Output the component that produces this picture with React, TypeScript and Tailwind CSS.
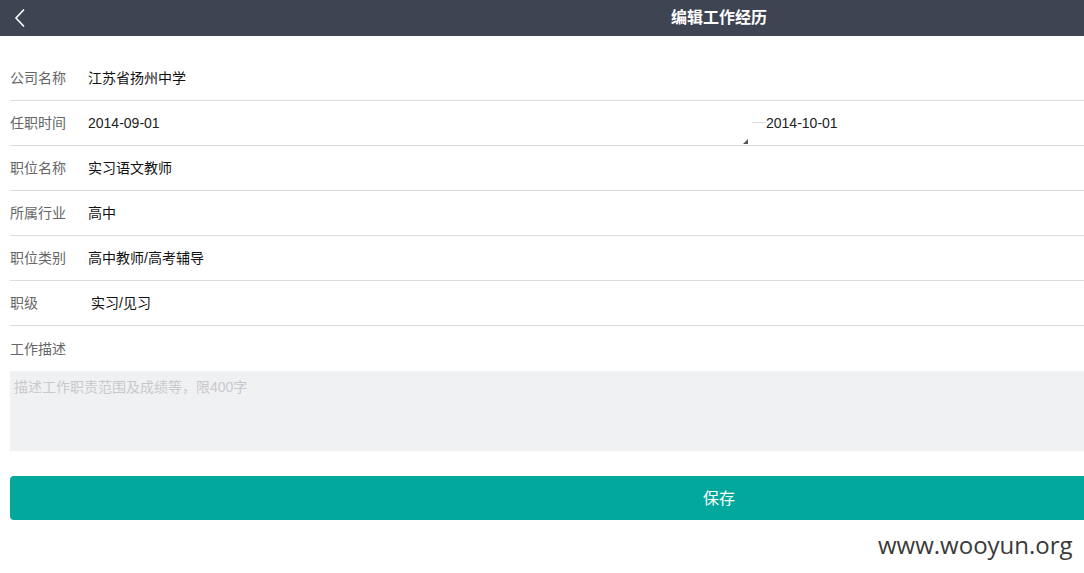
import React from 'react'

const rows = [
  { label: '公司名称', value: '江苏省扬州中学' },
  { label: '任职时间', value: '2014-09-01', end: '2014-10-01' },
  { label: '职位名称', value: '实习语文教师' },
  { label: '所属行业', value: '高中' },
  { label: '职位类别', value: '高中教师/高考辅导' },
  { label: '职级', value: '实习/见习', indent: true },
]

const font = { fontFamily: '"Liberation Sans", "Noto Sans CJK SC", sans-serif' }

export default function App() {
  return (
    <div className="w-full h-[573px] overflow-hidden bg-white relative" style={font}>
      <div className="w-[1438px]">
        <header className="h-9 bg-[#3f4452] flex items-center relative">
          <button className="w-10 h-9 flex items-center pl-[13px]">
            <svg width="14" height="20" viewBox="0 0 14 20" fill="none">
              <path d="M11 1.5 L3 10 L11 18.5" stroke="#fff" strokeWidth="1.6" />
            </svg>
          </button>
          <h1 className="absolute left-0 right-0 text-center text-white font-bold text-base leading-9 pointer-events-none">
            编辑工作经历
          </h1>
        </header>

        <div className="pl-[10px] pr-[10px] pt-[20px]">
          {rows.map((r) => (
            <div key={r.label} className="h-[45px] flex items-center border-b border-[#dcdcdc] text-sm">
              <span className="w-[78px] text-[#666]">{r.label}</span>
              {r.end ? (
                <div className="flex items-center flex-1 h-full">
                  <span className="w-[660px] text-[#222] relative h-full flex items-center">
                    {r.value}
                    <span className="absolute right-0 bottom-[1px] w-0 h-0 border-l-[5px] border-l-transparent border-b-[5px] border-b-[#555]" />
                  </span>
                  <span className="w-[14px] h-px bg-[#ddd] ml-[4px] mb-[2px]" />
                  <span className="text-[#222]">{r.end}</span>
                </div>
              ) : (
                <span className={`text-[#111] ${r.indent ? 'pl-[3px]' : ''}`}>{r.value}</span>
              )}
            </div>
          ))}
          <div className="h-[45px] flex items-center text-sm text-[#666]">工作描述</div>
          <textarea
            className="w-full h-[80px] bg-[#f0f1f3] resize-none outline-none px-[4px] py-[6px] text-sm placeholder:text-[#c8c9cc] block"
            placeholder="描述工作职责范围及成绩等，限400字"
          />
          <button className="mt-[25px] w-full h-[44px] rounded-[4px] bg-[#03a89c] text-white text-base pt-[2px]">
            保存
          </button>
        </div>
      </div>
      <div className="absolute left-[878px] top-[527px] text-[24px] text-[#3a3a3a] leading-9" style={{ fontFamily: '"Open Sans", sans-serif' }}>
        www.wooyun.org
      </div>
    </div>
  )
}
